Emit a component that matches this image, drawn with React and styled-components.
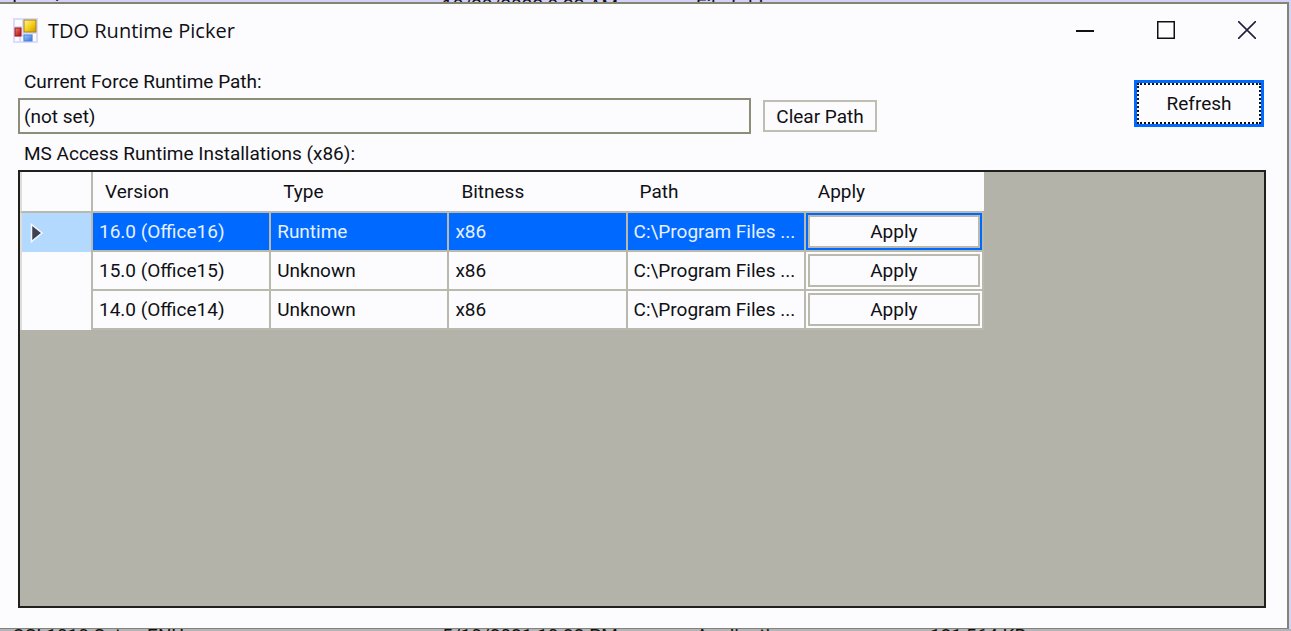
import React from "react";
import styled, { createGlobalStyle } from "styled-components";

const Global = createGlobalStyle`
  * { box-sizing: border-box; }
  body {
    margin: 0;
    background: #d2d2fa;
    color: #101014;
    font-family: Roboto, "Liberation Sans", sans-serif;
    font-size: 19px;
  }
  button, input { font: inherit; color: inherit; }
`;

const Screen = styled.div`
  display: flex;
  flex-direction: column;
  min-height: 100vh;
`;

const FileRow = styled.div`
  display: grid;
  grid-template-columns: 430px 254px 234px 1fr;
  align-items: ${(p) => (p.$below ? "start" : "end")};
  height: 2px;
  padding-left: 12px;
  overflow: hidden;
  background: ${(p) => (p.$below ? "#b4b4be" : "#d2d2fa")};
  line-height: ${(p) => (p.$below ? "14px" : "12px")};
  white-space: nowrap;
`;

const Window = styled.main`
  flex: 1;
  display: flex;
  flex-direction: column;
  margin-right: 2px;
  border: solid #85856f;
  border-width: 2px 2px 1px 0;
  background: #fcfcff;
`;

const TitleBar = styled.header`
  display: flex;
  align-items: center;
  height: 52px;
  padding-left: 13px;
`;

const Title = styled.h1`
  flex: 1;
  margin: 0 0 0 10px;
  font: 400 20px "Open Sans", "Noto Sans", sans-serif;
`;

const CaptionButton = styled.button`
  display: grid;
  place-items: center;
  width: 81px;
  height: 52px;
  padding: 0;
  border: 0;
  background: transparent;
`;

const Client = styled.div`
  flex: 1;
  display: flex;
  flex-direction: column;
  padding: 14px 21px 20px 18px;
`;

const TopRow = styled.div`
  display: flex;
  align-items: flex-start;
  justify-content: space-between;
`;

const PathGroup = styled.div`
  flex: 0 1 859px;
`;

const Label = styled.label`
  display: block;
  padding: 0 0 4px 6px;
  line-height: 24px;
`;

const Line = styled.div`
  display: flex;
  align-items: center;
  gap: 12px;
`;

const PathInput = styled.input`
  flex: 1;
  min-width: 0;
  height: 36px;
  padding: 0 4px;
  border: 2px solid #8e8e78;
  background: transparent;
  outline: 0;
`;

const Button = styled.button`
  width: 114px;
  height: 32px;
  padding: 0;
  border: 2px solid #bebeb3;
  background: #fcfcff;
`;

const RefreshButton = styled.button`
  width: 130px;
  height: 47px;
  margin: 10px 2px 0 0;
  padding: 0;
  border: 3px solid #0069ff;
  background: #fcfcff;
  outline: 2px dotted #101014;
  outline-offset: -5px;
`;

const GridLabel = styled.h2`
  margin: 8px 0 0;
  padding: 0 0 4px 6px;
  font-size: 19px;
  font-weight: 400;
  line-height: 24px;
`;

const GridBox = styled.section`
  flex: 1;
  border: 2px solid #20201c;
  background: #b3b3aa;
`;

const Table = styled.table`
  width: 964px;
  table-layout: fixed;
  border-collapse: separate;
  border-spacing: 0;
`;

const RowHeadCol = styled.col`
  width: 73px;
`;

const HeadCell = styled.th`
  height: 41px;
  padding: 0 0 0 12px;
  border-bottom: 2px solid #b9b9ae;
  background: #fcfcff;
  font-weight: 400;
  text-align: left;
  &:first-child {
    border-right: 2px solid #b9b9ae;
    border-left: 2px solid #dcdcd8;
  }
`;

const RowHead = styled.th`
  padding: 0 0 0 8px;
  border: solid #b9b9ae;
  border-width: 0 2px;
  border-left-color: #dcdcd8;
  background: ${(p) => (p.$selected ? "#b4d9ff" : "#fcfcff")};
  text-align: left;
`;

const Cell = styled.td`
  height: 39px;
  padding: 0 0 0 6px;
  border: solid #b9b9ae;
  border-width: 0 2px 2px 0;
  background: ${(p) => (p.$selected ? "#0069ff" : "#fcfcff")};
  color: ${(p) => (p.$selected ? "#e6f1ff" : "inherit")};
  white-space: nowrap;
`;

const ApplyCell = styled(Cell)`
  padding: 2px;
`;

const ApplyButton = styled.button`
  display: block;
  width: 100%;
  height: 33px;
  padding: 0;
  border: 2px solid #b9b9ae;
  background: #fcfcff;
  color: #101014;
`;

const AppIcon = () => (
  <svg width="25" height="25" viewBox="0 0 25 25" aria-hidden="true">
    <defs>
      <linearGradient id="yellow" x1="0" y1="0" x2="1" y2="1">
        <stop offset="0" stopColor="#fff3a0" />
        <stop offset="0.5" stopColor="#f8d020" />
        <stop offset="1" stopColor="#c79a00" />
      </linearGradient>
      <linearGradient id="red" x1="0" y1="0" x2="1" y2="1">
        <stop offset="0" stopColor="#f08070" />
        <stop offset="1" stopColor="#a80c0c" />
      </linearGradient>
      <linearGradient id="blue" x1="0" y1="0" x2="1" y2="1">
        <stop offset="0" stopColor="#9ccbff" />
        <stop offset="1" stopColor="#2f74d8" />
      </linearGradient>
    </defs>
    <rect width="25" height="25" fill="#dcdcfa" />
    <path d="M2 2h7v6H2zM2 19h4v4H2zM8 19h2v4H8zM20 16h3v7h-3z" fill="#fcfcff" />
    <rect x="11" y="2" width="12" height="12" fill="url(#yellow)" stroke="#a88408" />
    <rect x="2" y="10" width="6" height="8" fill="url(#red)" stroke="#a01414" />
    <rect x="11" y="17" width="8" height="6" fill="url(#blue)" stroke="#4a84d8" />
  </svg>
);

const rows = [
  { version: "16.0 (Office16)", type: "Runtime", selected: true },
  { version: "15.0 (Office15)", type: "Unknown" },
  { version: "14.0 (Office14)", type: "Unknown" },
];

export default function App() {
  return (
    <Screen>
      <Global />
      <FileRow aria-hidden="true">
        <span>Imaging</span>
        <span>10/20/2022 9:22 AM</span>
        <span>File folder</span>
      </FileRow>
      <Window>
        <TitleBar>
          <AppIcon />
          <Title>TDO Runtime Picker</Title>
          <CaptionButton aria-label="Minimize">
            <svg width="18" height="18" viewBox="0 0 18 18">
              <path d="M0 10h18" stroke="#101014" strokeWidth="2" />
            </svg>
          </CaptionButton>
          <CaptionButton aria-label="Maximize">
            <svg width="18" height="18" viewBox="0 0 18 18">
              <rect x="0.750" y="0.750" width="16.500" height="16.500" fill="none" stroke="#101014" strokeWidth="1.500" />
            </svg>
          </CaptionButton>
          <CaptionButton aria-label="Close">
            <svg width="18" height="18" viewBox="0 0 18 18">
              <path d="M0 0L18 18M18 0L0 18" stroke="#20203c" strokeWidth="1.600" />
            </svg>
          </CaptionButton>
        </TitleBar>
        <Client>
          <TopRow>
            <PathGroup>
              <Label htmlFor="path">Current Force Runtime Path:</Label>
              <Line>
                <PathInput id="path" defaultValue="(not set)" readOnly />
                <Button>Clear Path</Button>
              </Line>
            </PathGroup>
            <RefreshButton>Refresh</RefreshButton>
          </TopRow>
          <GridLabel id="installs">MS Access Runtime Installations (x86):</GridLabel>
          <GridBox>
            <Table aria-labelledby="installs">
              <colgroup>
                <RowHeadCol />
                <col span="5" />
              </colgroup>
              <thead>
                <tr>
                  <HeadCell aria-label="Current row" />
                  <HeadCell>Version</HeadCell>
                  <HeadCell>Type</HeadCell>
                  <HeadCell>Bitness</HeadCell>
                  <HeadCell>Path</HeadCell>
                  <HeadCell>Apply</HeadCell>
                </tr>
              </thead>
              <tbody>
                {rows.map(({ version, type, selected }) => (
                  <tr key={version}>
                    <RowHead scope="row" $selected={selected} aria-label={version}>
                      {selected && (
                        <svg width="14" height="20" viewBox="0 0 14 20" display="block">
                          <path d="M1.500 1.500L12 10L1.500 18.500Z" fill="#404050" stroke="#f4f8ff" strokeWidth="1.500" />
                        </svg>
                      )}
                    </RowHead>
                    <Cell $selected={selected}>{version}</Cell>
                    <Cell $selected={selected}>{type}</Cell>
                    <Cell $selected={selected}>x86</Cell>
                    <Cell $selected={selected}>C:\Program Files ...</Cell>
                    <ApplyCell $selected={selected}>
                      <ApplyButton>Apply</ApplyButton>
                    </ApplyCell>
                  </tr>
                ))}
              </tbody>
            </Table>
          </GridBox>
        </Client>
      </Window>
      <FileRow $below aria-hidden="true">
        <span>OSI 1010 Setup ENU</span>
        <span>5/10/2021 10:32 PM</span>
        <span>Application</span>
        <span>131,564 KB</span>
      </FileRow>
    </Screen>
  );
}
